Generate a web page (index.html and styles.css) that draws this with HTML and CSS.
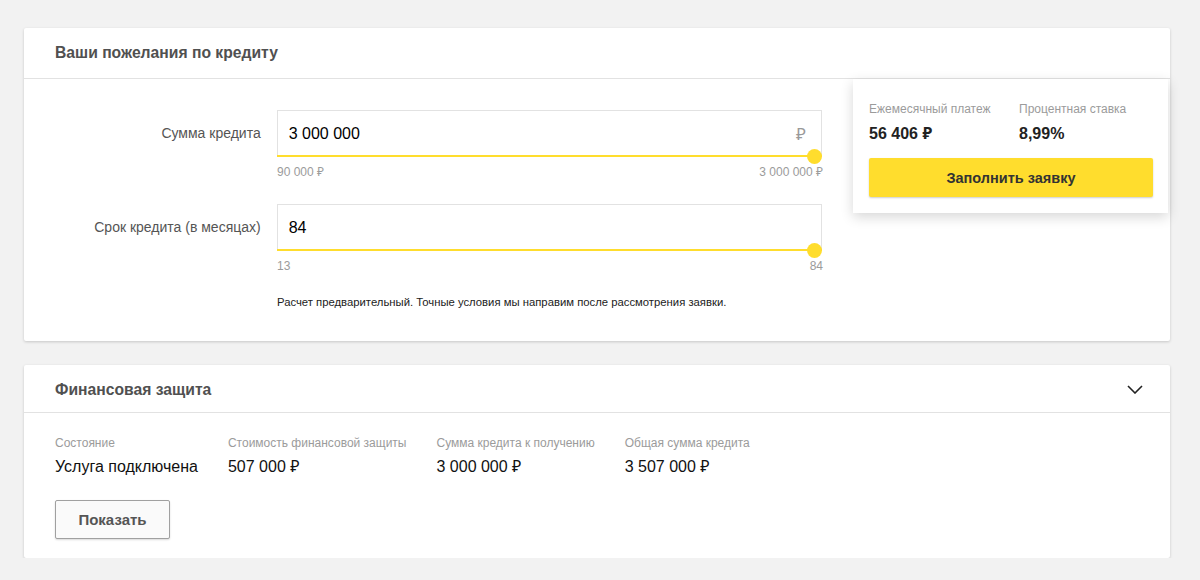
FILE: index.html
```html
<!DOCTYPE html>
<html lang="ru">
<head>
<meta charset="utf-8">
<title>Кредит</title>
<link rel="stylesheet" href="styles.css">
</head>
<body>
<div class="page">
  <section class="card">
    <header class="card-head">
      <h2 class="card-title">Ваши пожелания по кредиту</h2>
    </header>
    <div class="card-body calc">
      <div class="form">
        <div class="row">
          <div class="row-main">
            <label class="row-label">Сумма кредита</label>
            <div class="slider">
              <div class="field">
                <span class="field-value">3 000 000</span>
                <span class="field-unit">₽</span>
              </div>
              <div class="track"><span class="thumb"></span></div>
            </div>
          </div>
          <div class="limits">
            <span>90 000 ₽</span>
            <span>3 000 000 ₽</span>
          </div>
        </div>
        <div class="row row-second">
          <div class="row-main">
            <label class="row-label">Срок кредита (в месяцах)</label>
            <div class="slider">
              <div class="field">
                <span class="field-value">84</span>
              </div>
              <div class="track"><span class="thumb"></span></div>
            </div>
          </div>
          <div class="limits">
            <span>13</span>
            <span>84</span>
          </div>
        </div>
        <p class="note">Расчет предварительный. Точные условия мы направим после рассмотрения заявки.</p>
      </div>
      <aside class="result">
        <div class="result-stats">
          <div class="stat stat-first">
            <div class="stat-label">Ежемесячный платеж</div>
            <div class="stat-value">56 406 ₽</div>
          </div>
          <div class="stat">
            <div class="stat-label">Процентная ставка</div>
            <div class="stat-value">8,99%</div>
          </div>
        </div>
        <button class="btn-primary" type="button">Заполнить заявку</button>
      </aside>
    </div>
  </section>

  <section class="card card-second">
    <header class="card-head card-head-toggle">
      <h2 class="card-title">Финансовая защита</h2>
      <svg class="chevron" width="16" height="9" viewBox="0 0 16 9" aria-hidden="true"><path d="M1 1l7 7 7-7" fill="none" stroke="#222" stroke-width="1.6"/></svg>
    </header>
    <div class="card-body protect">
      <div class="info">
        <div class="info-item">
          <div class="info-label">Состояние</div>
          <div class="info-value">Услуга подключена</div>
        </div>
        <div class="info-item">
          <div class="info-label">Стоимость финансовой защиты</div>
          <div class="info-value">507 000 ₽</div>
        </div>
        <div class="info-item">
          <div class="info-label">Сумма кредита к получению</div>
          <div class="info-value">3 000 000 ₽</div>
        </div>
        <div class="info-item">
          <div class="info-label">Общая сумма кредита</div>
          <div class="info-value">3 507 000 ₽</div>
        </div>
      </div>
      <button class="btn-secondary" type="button">Показать</button>
    </div>
  </section>
</div>
</body>
</html>
```
FILE: styles.css
```css
* { box-sizing: border-box; }
html, body { margin: 0; padding: 0; }
body {
  background: #f2f2f2;
  font-family: "Liberation Sans", Arial, "Noto Sans", sans-serif;
  color: #333;
}
.page {
  padding: 28px 30px 0 24px;
}
.card {
  background: #fff;
  border-radius: 2px;
  box-shadow: 0 1px 3px rgba(0,0,0,0.18);
}
.card-second { margin-top: 24px; }
.card-head {
  height: 51px;
  border-bottom: 1px solid #e2e2e2;
  display: flex;
  align-items: center;
  padding: 0 27px 0 31px;
}
.card-head-toggle {
  height: 48px;
  padding-top: 2px;
  justify-content: space-between;
}
.card-title {
  margin: 0;
  font-size: 15.7px;
  font-weight: bold;
  color: #505050;
}
.chevron { display: block; margin-top: -1px; }

/* calculator */
.calc {
  display: flex;
  align-items: flex-start;
}
.form {
  width: 798px;
  padding-top: 31px;
  padding-bottom: 31px;
}
.row-main {
  display: flex;
  align-items: flex-start;
}
.row-label {
  width: 237px;
  text-align: right;
  font-size: 14px;
  color: #555;
  margin-right: 16px;
  line-height: 46px;
}
.slider { width: 546px; }
.field {
  height: 45px;
  border: 1px solid #e2e2e2;
  border-bottom: none;
  display: flex;
  align-items: center;
  justify-content: space-between;
  padding: 1px 15px 0 11px;
}
.field-value {
  font-size: 16px;
  color: #000;
}
.field-unit {
  font-size: 17px;
  color: #999;
}
.track {
  position: relative;
  height: 2px;
  background: #ffdd2d;
}
.thumb {
  position: absolute;
  right: 0;
  top: -6.5px;
  width: 15px;
  height: 15px;
  border-radius: 50%;
  background: #ffdd2d;
}
.limits {
  margin-left: 253px;
  width: 546px;
  display: flex;
  justify-content: space-between;
  font-size: 12px;
  color: #9b9b9b;
  margin-top: 8px;
  line-height: 14px;
}
.row-second { margin-top: 25px; }
.note {
  margin: 21px 0 0 253px;
  font-size: 11.3px;
  color: #222;
  line-height: 16px;
}

/* result panel */
.result {
  margin-left: 31px;
  width: 315px;
  background: #fff;
  box-shadow: 0 4px 12px rgba(0,0,0,0.16);
  padding: 23px 15px 16px 16px;
}
.result-stats { display: flex; }
.stat-first { width: 150px; }
.stat-label {
  font-size: 12px;
  color: #9b9b9b;
  line-height: 15px;
}
.stat-value {
  font-size: 16px;
  font-weight: bold;
  color: #222;
  margin-top: 8px;
  line-height: 18px;
}
.btn-primary {
  display: block;
  width: 100%;
  height: 39px;
  margin-top: 15px;
  border: none;
  border-radius: 2px;
  background: #ffdd2d;
  box-shadow: 0 1px 2px rgba(0,0,0,0.2);
  font-family: inherit;
  font-size: 14.5px;
  font-weight: bold;
  color: #333;
}

/* protection */
.protect {
  padding: 22px 31px 19px;
}
.info { display: flex; gap: 30px; }
.info-label {
  font-size: 12px;
  color: #9b9b9b;
  line-height: 16px;
}
.info-value {
  font-size: 16px;
  color: #111;
  margin-top: 6px;
  line-height: 20px;
}
.btn-secondary {
  display: block;
  margin-top: 23px;
  width: 115px;
  height: 39px;
  background: #fafafa;
  border: 1px solid #a0a0a0;
  border-radius: 2px;
  box-shadow: 0 1px 2px rgba(0,0,0,0.15);
  font-family: inherit;
  font-size: 15px;
  font-weight: bold;
  color: #555;
}
```
